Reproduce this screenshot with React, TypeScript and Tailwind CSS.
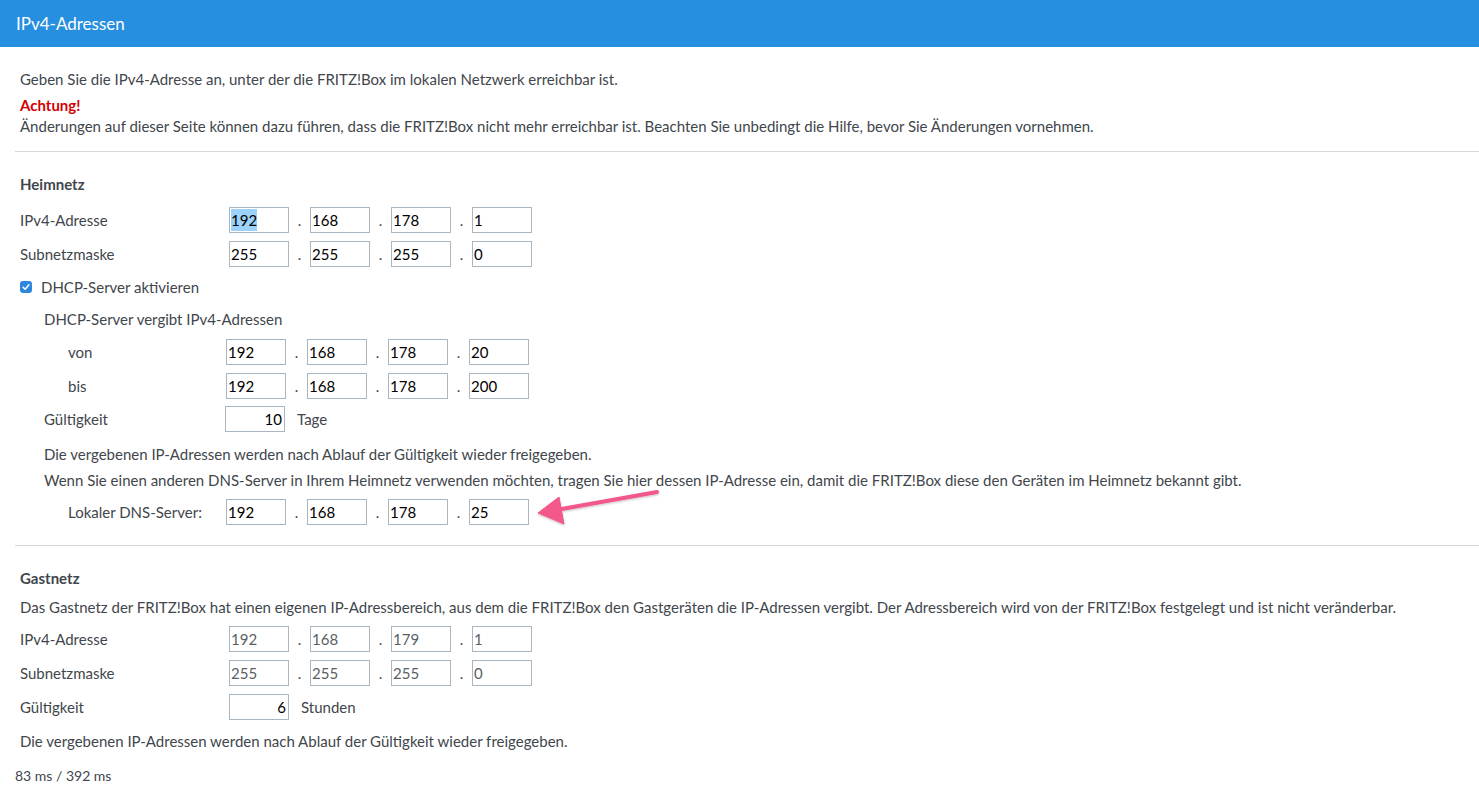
import React from "react";

type Ip = [string, string, string, string];

function Field({ value, selected, muted, right, w = "w-[60px]" }: { value: string; selected?: boolean; muted?: boolean; right?: boolean; w?: string }) {
  return (
    <div
      className={`${w} h-[26px] border border-[#a9b7c3] bg-white flex items-center px-[1px] text-[15px] ${
        right ? "justify-end pr-[2px]" : ""
      } ${muted ? "text-[#5a5f63]" : "text-black"}`}
    >
      <span className={selected ? "bg-[#9bd2fa]" : ""}>{value}</span>
    </div>
  );
}

function IpFields({ ip, muted, selectFirst }: { ip: Ip; muted?: boolean; selectFirst?: boolean }) {
  return (
    <div className="flex items-center">
      {ip.map((part, i) => (
        <React.Fragment key={i}>
          {i > 0 && <span className="w-[21px] text-center text-[#3f464c]">.</span>}
          <Field value={part} muted={muted} selected={selectFirst && i === 0} />
        </React.Fragment>
      ))}
    </div>
  );
}

function Row({ label, labelW, indent = "", children }: { label: string; labelW: string; indent?: string; children: React.ReactNode }) {
  return (
    <div className="h-[34px] flex items-center">
      <div className={`${labelW} ${indent} shrink-0`}>{label}</div>
      {children}
    </div>
  );
}

export default function App() {
  return (
    <div
      className="relative min-h-screen bg-white text-[#3f464c] text-[15px] leading-[22px]"
      style={{ fontFamily: "Lato, 'Noto Sans', sans-serif" }}
    >
      <header className="h-[47px] bg-[#268fdf] flex items-center pl-4">
        <h1 className="text-white text-[17px]">IPv4-Adressen</h1>
      </header>

      <div className="ml-[15px]">
        <div className="pl-[5px]">
          <p className="mt-[21px]">
            Geben Sie die IPv4-Adresse an, unter der die FRITZ!Box im lokalen Netzwerk erreichbar ist.
          </p>
          <p className="mt-[5px] leading-[21px] font-bold text-[#d40000]">Achtung!</p>
          <p className="leading-[21px]">
            Änderungen auf dieser Seite können dazu führen, dass die FRITZ!Box nicht mehr erreichbar ist. Beachten Sie
            unbedingt die Hilfe, bevor Sie Änderungen vornehmen.
          </p>
        </div>

        <hr className="mt-[14px] border-0 border-t border-[#d6d8da]" />

        {/* Heimnetz */}
        <section className="pl-[5px]">
          <h2 className="mt-[21px] font-bold">Heimnetz</h2>
          <div className="mt-[8px]">
            <Row label="IPv4-Adresse" labelW="w-[209px]">
              <IpFields ip={["192", "168", "178", "1"]} selectFirst />
            </Row>
            <Row label="Subnetzmaske" labelW="w-[209px]">
              <IpFields ip={["255", "255", "255", "0"]} />
            </Row>
            <div className="h-[32px] flex items-center">
              <span className="w-[12px] h-[12px] rounded-[3px] bg-[#2e86de] flex items-center justify-center mr-[9px]">
                <svg viewBox="0 0 12 12" className="w-[10px] h-[10px]">
                  <path d="M2.5 6.2 L5 8.6 L9.5 3.4" fill="none" stroke="white" strokeWidth="1.8" strokeLinecap="round" strokeLinejoin="round" />
                </svg>
              </span>
              <span>DHCP-Server aktivieren</span>
            </div>
            <div className="pl-[24px]">
              <div className="h-[32px] flex items-center">DHCP-Server vergibt IPv4-Adressen</div>
              <Row label="von" labelW="w-[182px]" indent="pl-[24px]">
                <IpFields ip={["192", "168", "178", "20"]} />
              </Row>
              <Row label="bis" labelW="w-[182px]" indent="pl-[24px]">
                <IpFields ip={["192", "168", "178", "200"]} />
              </Row>
              <div className="-mt-[1px]">
                <Row label="Gültigkeit" labelW="w-[181px]">
                  <Field value="10" right />
                  <span className="ml-[12px]">Tage</span>
                </Row>
              </div>
              <p className="mt-[7px]">Die vergebenen IP-Adressen werden nach Ablauf der Gültigkeit wieder freigegeben.</p>
              <p className="mt-[4px]">
                Wenn Sie einen anderen DNS-Server in Ihrem Heimnetz verwenden möchten, tragen Sie hier dessen IP-Adresse
                ein, damit die FRITZ!Box diese den Geräten im Heimnetz bekannt gibt.
              </p>
              <div className="mt-[4px]">
                <Row label="Lokaler DNS-Server:" labelW="w-[182px]" indent="pl-[24px]">
                  <IpFields ip={["192", "168", "178", "25"]} />
                </Row>
              </div>
            </div>
          </div>
        </section>

        <hr className="mt-[16px] border-0 border-t border-[#d6d8da]" />

        {/* Gastnetz */}
        <section className="pl-[5px]">
          <h2 className="mt-[21px] font-bold">Gastnetz</h2>
          <p className="mt-[7px]">
            Das Gastnetz der FRITZ!Box hat einen eigenen IP-Adressbereich, aus dem die FRITZ!Box den Gastgeräten die
            IP-Adressen vergibt. Der Adressbereich wird von der FRITZ!Box festgelegt und ist nicht veränderbar.
          </p>
          <div className="mt-[4px]">
            <Row label="IPv4-Adresse" labelW="w-[209px]">
              <IpFields ip={["192", "168", "179", "1"]} muted />
            </Row>
            <Row label="Subnetzmaske" labelW="w-[209px]">
              <IpFields ip={["255", "255", "255", "0"]} muted />
            </Row>
            <Row label="Gültigkeit" labelW="w-[209px]">
              <Field value="6" right />
              <span className="ml-[12px]">Stunden</span>
            </Row>
          </div>
          <p className="mt-[6px]">Die vergebenen IP-Adressen werden nach Ablauf der Gültigkeit wieder freigegeben.</p>
        </section>

        <p className="mt-[13px] text-[14px]">83 ms / 392 ms</p>
      </div>

      {/* pink pointer next to the DNS field */}
      <svg className="absolute left-[530px] top-[485px] w-[140px] h-[50px] pointer-events-none" viewBox="530 485 140 50">
        <defs>
          <filter id="arrowShadow" x="-20%" y="-40%" width="140%" height="180%">
            <feDropShadow dx="0" dy="1" stdDeviation="1" floodColor="#000" floodOpacity="0.25" />
          </filter>
        </defs>
        <g filter="url(#arrowShadow)" fill="#f3588b" stroke="#f3588b">
          <line x1="657" y1="492" x2="556" y2="510" strokeWidth="4" strokeLinecap="round" />
          <polygon points="538,513 559,497 564,524" strokeWidth="1" strokeLinejoin="round" />
        </g>
      </svg>
    </div>
  );
}
